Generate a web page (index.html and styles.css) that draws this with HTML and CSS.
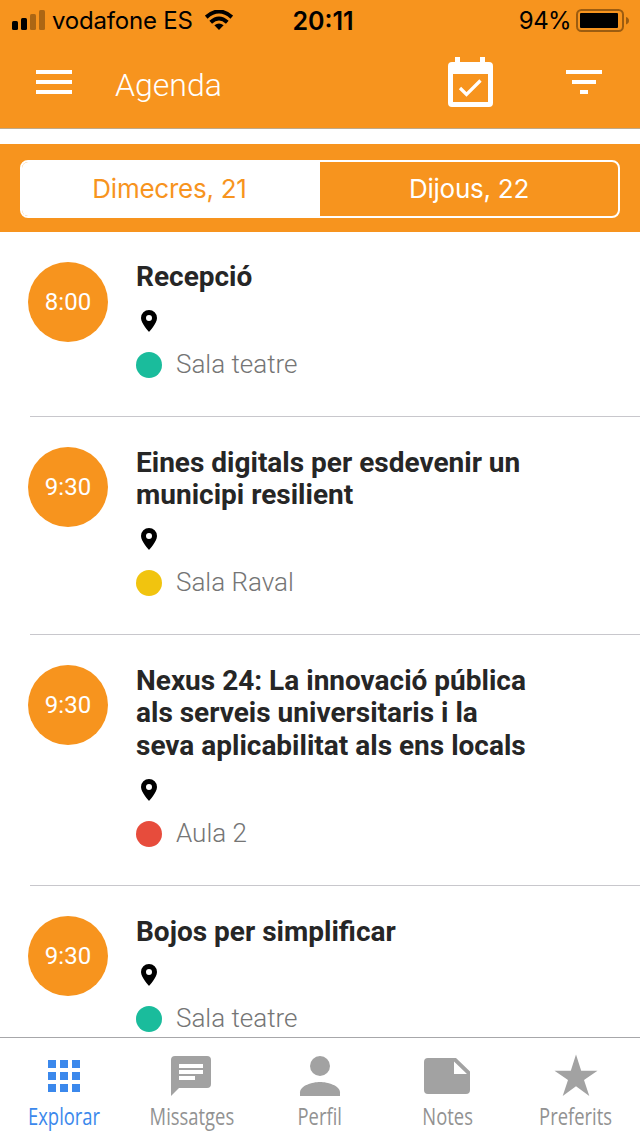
FILE: index.html
```html
<!DOCTYPE html>
<html lang="ca">
<head>
<meta charset="utf-8">
<title>Agenda</title>
<link rel="stylesheet" href="styles.css">
</head>
<body>
<div class="app">
  <header class="header">
    <div class="status">
      <div class="status-left">
        <svg class="signal" width="34" height="20" viewBox="0 0 34 20"><rect x="0" y="11" width="6" height="9" rx="1.5"/><rect x="9" y="8" width="6" height="12" rx="1.5"/><g opacity=".3"><rect x="18" y="4" width="6" height="16" rx="1.5"/><rect x="27" y="0" width="6" height="20" rx="1.5"/></g></svg>
        <span class="carrier">vodafone ES</span>
        <svg class="wifi" width="28" height="20" viewBox="0 0 28 20"><g fill="none" stroke="#000" stroke-width="4"><path d="M1.200 7.200Q14-4.200 26.800 7.200"/><path d="M5.700 12.200Q14 4.800 22.300 12.200"/></g><path d="M14 20l-4.600-4.700Q14 11.700 18.600 15.300z"/></svg>
      </div>
      <span class="clock">20:11</span>
      <div class="status-right">
        <span class="percent">94%</span>
        <svg width="54" height="24" viewBox="0 0 54 24"><rect x="1" y="2" width="46" height="21" rx="4.500" fill="none" stroke="#9c5c10" stroke-width="2"/><rect x="4" y="5" width="38" height="15" rx="1"/><path d="M50 9q3 1 3 3.700t-3 3.700z" fill="#9c5c10"/></svg>
      </div>
    </div>
    <div class="toolbar">
      <svg class="menu-icon" width="36" height="24" viewBox="0 0 36 24" fill="#fff"><path d="M0 0h36v4H0zM0 10h36v4H0zM0 20h36v4H0z"/></svg>
      <h1 class="page-title">Agenda</h1>
      <svg class="calendar-icon" width="45" height="50" viewBox="0 0 45 50" fill="#fff"><path fill-rule="evenodd" d="M7 0h5v5h20V0h5v5h4q4 0 4 4v37q0 4-4 4H4q-4 0-4-4V9q0-4 4-4h3zM5 17v28h35V17z"/><path d="M12 31l6.500 6.500L32.500 23.500" fill="none" stroke="#fff" stroke-width="3.200"/></svg>
      <svg class="filter-icon" width="36" height="24" viewBox="0 0 36 24" fill="#fff"><path d="M0 0h36v4H0zM6 10h24v4H6zM14 20h8v4h-8z"/></svg>
    </div>
  </header>
  <nav class="days">
    <div class="segments">
      <div class="segment active"><span>Dimecres, 21</span></div>
      <div class="segment"><span>Dijous, 22</span></div>
    </div>
  </nav>
  <main class="list">
    <article class="item">
      <div class="time">8:00</div>
      <div class="details">
        <h2 class="title">Recepció</h2>
        <div class="row"><svg class="pin" width="16" height="22" viewBox="0 0 16 22"><path fill-rule="evenodd" d="M8 0a8 8 0 0 0-8 8c0 5.500 8 14 8 14s8-8.500 8-14a8 8 0 0 0-8-8zm0 5a3 3 0 1 1 0 6 3 3 0 0 1 0-6z"/></svg></div>
        <div class="row"><i class="dot green"></i><span class="room">Sala teatre</span></div>
      </div>
    </article>
    <article class="item">
      <div class="time">9:30</div>
      <div class="details">
        <h2 class="title">Eines digitals per esdevenir un<br>municipi resilient</h2>
        <div class="row"><svg class="pin" width="16" height="22" viewBox="0 0 16 22"><path fill-rule="evenodd" d="M8 0a8 8 0 0 0-8 8c0 5.500 8 14 8 14s8-8.500 8-14a8 8 0 0 0-8-8zm0 5a3 3 0 1 1 0 6 3 3 0 0 1 0-6z"/></svg></div>
        <div class="row"><i class="dot yellow"></i><span class="room">Sala Raval</span></div>
      </div>
    </article>
    <article class="item">
      <div class="time">9:30</div>
      <div class="details">
        <h2 class="title">Nexus 24: La innovació pública<br>als serveis universitaris i la<br>seva aplicabilitat als ens locals</h2>
        <div class="row"><svg class="pin" width="16" height="22" viewBox="0 0 16 22"><path fill-rule="evenodd" d="M8 0a8 8 0 0 0-8 8c0 5.500 8 14 8 14s8-8.500 8-14a8 8 0 0 0-8-8zm0 5a3 3 0 1 1 0 6 3 3 0 0 1 0-6z"/></svg></div>
        <div class="row"><i class="dot red"></i><span class="room">Aula 2</span></div>
      </div>
    </article>
    <article class="item">
      <div class="time">9:30</div>
      <div class="details">
        <h2 class="title">Bojos per simplificar</h2>
        <div class="row"><svg class="pin" width="16" height="22" viewBox="0 0 16 22"><path fill-rule="evenodd" d="M8 0a8 8 0 0 0-8 8c0 5.500 8 14 8 14s8-8.500 8-14a8 8 0 0 0-8-8zm0 5a3 3 0 1 1 0 6 3 3 0 0 1 0-6z"/></svg></div>
        <div class="row"><i class="dot green"></i><span class="room">Sala teatre</span></div>
      </div>
    </article>
  </main>
  <nav class="tabs">
    <div class="tab selected">
      <svg width="48" height="48" viewBox="0 0 48 48"><path d="M8 8h8v8H8zM20 8h8v8h-8zM32 8h8v8h-8zM8 20h8v8H8zM20 20h8v8h-8zM32 20h8v8h-8zM8 32h8v8H8zM20 32h8v8h-8zM32 32h8v8h-8z"/></svg>
      <span class="tab-label">Explorar</span>
    </div>
    <div class="tab">
      <svg width="48" height="48" viewBox="0 0 48 48"><path fill-rule="evenodd" d="M7 4h32q4 0 4 4v24q0 4-4 4H11l-8 8V8q0-4 4-4zm4 8v4h24v-4zm0 6v4h24v-4zm0 6v4h16v-4z"/></svg>
      <span class="tab-label">Missatges</span>
    </div>
    <div class="tab">
      <svg width="48" height="48" viewBox="0 0 48 48"><circle cx="24" cy="14" r="10"/><path d="M4 44v-3.500C4 33.500 16.500 30 24 30s20 3.500 20 10.500V44z"/></svg>
      <span class="tab-label">Perfil</span>
    </div>
    <div class="tab">
      <svg width="48" height="48" viewBox="0 0 48 48"><path fill-rule="evenodd" d="M4 6h28L46 19.500V38q0 4-4 4H4q-4 0-4-4V10q0-4 4-4zm26 3.500V22h13z"/></svg>
      <span class="tab-label">Notes</span>
    </div>
    <div class="tab">
      <svg width="48" height="48" viewBox="0 0 48 48"><path d="M24 2.500l5.200 16.300h16.300L32 28l5.300 16L24 34.300 10.700 44 16 28 2.500 18.800h16.300z"/></svg>
      <span class="tab-label">Preferits</span>
    </div>
  </nav>
</div>
</body>
</html>
```
FILE: styles.css
```css
* { box-sizing: border-box; }
body { margin: 0; background: #fff; font-family: Roboto, sans-serif; }
svg { display: block; flex: none; }
.app { width: 640px; height: 1136px; display: flex; flex-direction: column; overflow: hidden; background: #fff; }

.header { flex: none; height: 129px; background: #f7941e; border-bottom: 1px solid #bda98c; }
.status { height: 40px; padding: 0 10px 0 12px; display: grid; grid-template-columns: 1fr auto 1fr; align-items: center; font-family: Inter, sans-serif; color: #000; }
.status-left, .status-right { display: flex; align-items: center; white-space: nowrap; }
.status-right { justify-content: flex-end; }
.signal { margin-right: 6px; }
.carrier { font-size: 24px; letter-spacing: -.2px; }
.wifi { margin-left: 12px; }
.clock { font-size: 25px; font-weight: 600; margin: 1px 0 0 4px; }
.percent { font-size: 24px; letter-spacing: -.6px; margin-right: 5px; }

.toolbar { height: 88px; padding: 0 38px 0 36px; display: flex; align-items: center; }
.menu-icon { margin-bottom: 4px; }
.page-title { margin: 2px 0 0 43px; font-size: 32px; font-weight: 300; color: #fff; flex: 1; }
.calendar-icon { margin-bottom: 5px; }
.filter-icon { margin: 0 0 4px 73px; }

.days { flex: none; margin-top: 15px; height: 88px; padding: 16px 20px 14px; background: #f7941e; }
.segments { height: 58px; display: flex; border: 2px solid #fff; border-radius: 8px; overflow: hidden; font-family: Inter, sans-serif; font-size: 26px; letter-spacing: -.25px; color: #fff; }
.segment { flex: none; width: 50%; display: flex; align-items: center; justify-content: center; padding-bottom: 2px; }
.active { background: #fff; color: #f7941e; padding-right: 3px; }

.list { flex: 1; min-height: 0; overflow: hidden; }
.item { margin-left: 30px; padding: 29.400px 0 29.250px; border-bottom: 1px solid #c8c7cc; display: flex; align-items: flex-start; }
.time { flex: none; width: 80px; height: 80px; margin: .5px 28px 0 -2px; border-radius: 50%; background: #f7941e; color: #fff; font-size: 24px; line-height: 80px; text-align: center; }
.title { margin: 0 0 5px; font-size: 28px; line-height: 32.700px; font-weight: 700; color: #262626; white-space: nowrap; }
.row { height: 44px; display: flex; align-items: center; }
.pin { margin-left: 5px; }
.dot { width: 26px; height: 26px; border-radius: 50%; margin-right: 14px; }
.green { background: #1abc9c; }
.yellow { background: #f1c40f; }
.red { background: #e74c3c; }
.room { font-size: 26px; font-weight: 300; color: #757575; margin-bottom: 2px; }

.tabs { flex: none; height: 99px; border-top: 1px solid #a7a7aa; display: flex; background: #fff; color: #929292; fill: #a2a2a2; }
.tab { flex: 1; display: flex; flex-direction: column; align-items: center; padding-top: 14px; }
.tab-label { font-family: "Open Sans", sans-serif; font-size: 23px; font-weight: 500; line-height: 32px; transform: scaleX(.8); }
.selected { color: #3b88ec; fill: #3b88ec; }
```
